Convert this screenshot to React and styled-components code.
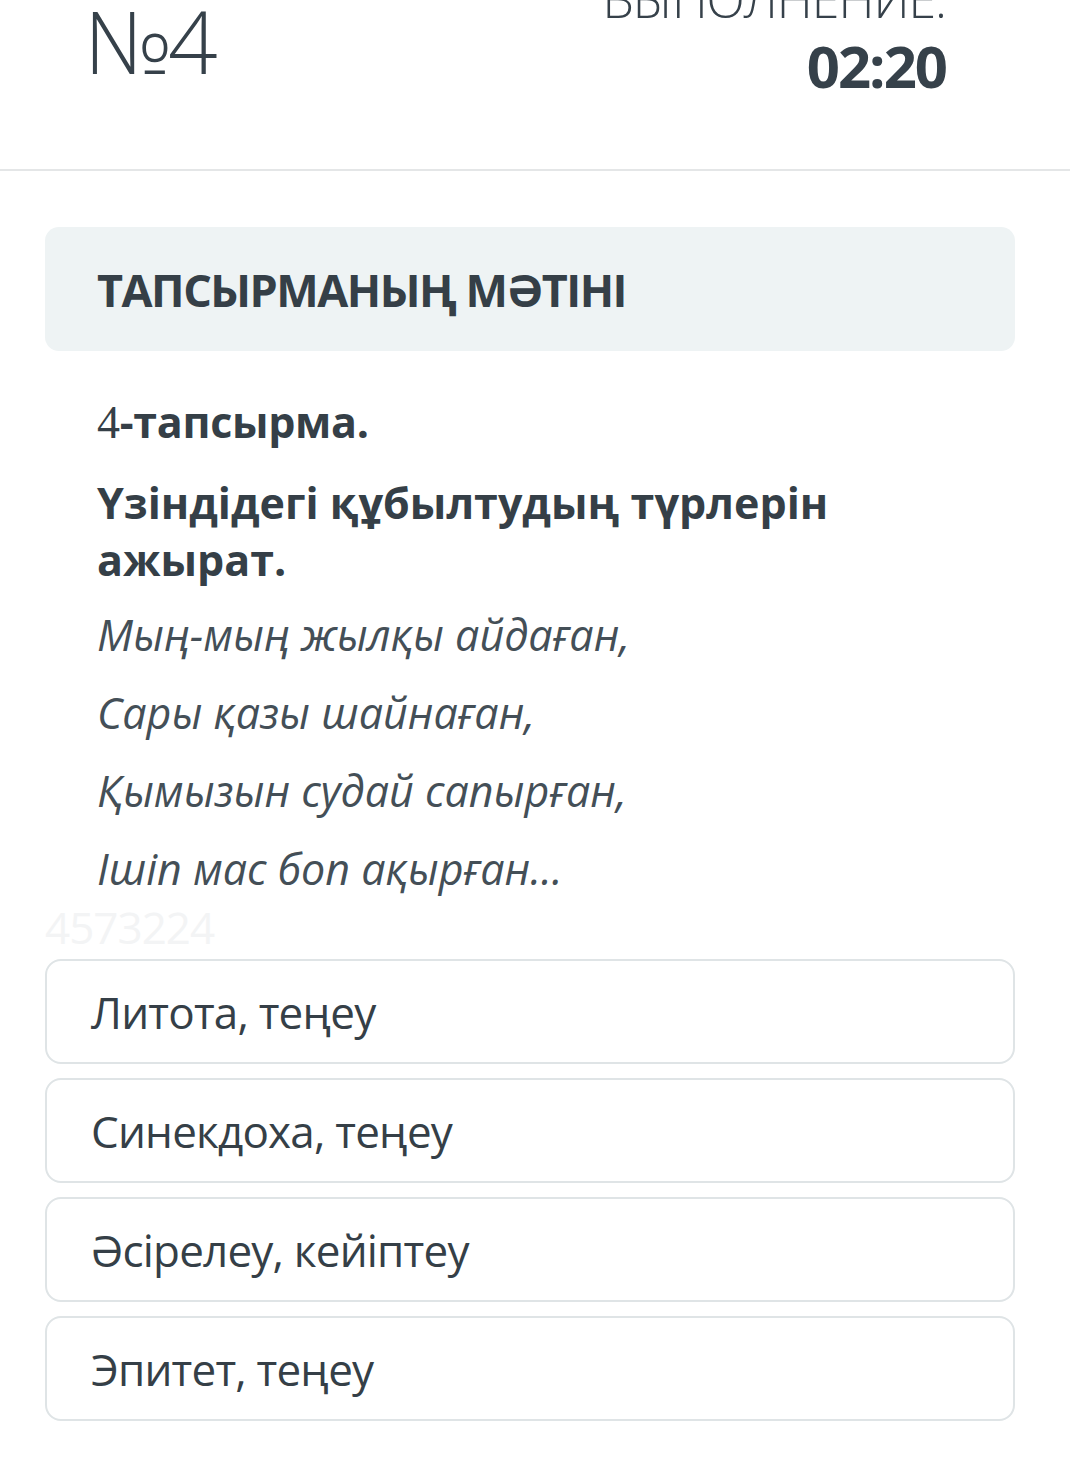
import React from "react";
import styled, { createGlobalStyle } from "styled-components";

const Global = createGlobalStyle`
  html, body { margin: 0; padding: 0; background: #ffffff; }
  body { font-family: "Open Sans", "Noto Sans", sans-serif; color: #353f47; }
`;

const Page = styled.div`
  width: 1070px;
  min-height: 1472px;
  background: #ffffff;
  overflow: hidden;
`;

const TopBar = styled.header`
  display: flex;
  justify-content: space-between;
  align-items: flex-start;
  padding: 0 124px 0 84px;
  border-bottom: 2px solid #e4e6e7;
  box-sizing: border-box;
  height: 171px;
`;

const Number = styled.div`
  font-size: 87px;
  font-weight: 300;
  line-height: 1.1;
  margin-top: -7px;
  letter-spacing: -4px;
  color: #36414a;
`;

const Timer = styled.div`
  display: flex;
  flex-direction: column;
  align-items: flex-end;
  margin-top: -35px;
`;

const TimerLabel = styled.div`
  font-size: 50px;
  font-weight: 300;
  line-height: 68px;
  letter-spacing: -1px;
  color: #36414a;
`;

const TimerValue = styled.div`
  font-size: 58px;
  font-weight: 700;
  line-height: 66px;
  letter-spacing: -2px;
  color: #36414a;
`;

const Content = styled.main`
  padding: 56px 55px 0 45px;
  display: flex;
  flex-direction: column;
`;

const TitleBox = styled.div`
  background: #eef3f4;
  border-radius: 14px;
  height: 124px;
  display: flex;
  align-items: center;
  padding-left: 52px;
`;

const Title = styled.h2`
  margin: 0;
  font-size: 45px;
  font-weight: 700;
  letter-spacing: -1.5px;
  color: #353f47;
`;

const Body = styled.section`
  padding: 42px 52px 0 52px;
  display: flex;
  flex-direction: column;
`;

const TaskNo = styled.p`
  margin: 0;
  font-size: 43px;
  font-weight: 700;
  line-height: 58px;
  letter-spacing: -0.3px;
  color: #353f47;
  & span {
    font-family: "Liberation Serif", "DejaVu Serif", serif;
    font-weight: 400;
    font-size: 46px;
  }
`;

const Question = styled.p`
  margin: 22px 0 0;
  font-size: 43px;
  font-weight: 700;
  line-height: 57px;
  letter-spacing: 0px;
  color: #353f47;
`;

const Verse = styled.p`
  margin: ${(p) => (p.$first ? "18px" : "20px")} 0 0;
  font-size: 43px;
  font-style: italic;
  font-weight: 400;
  line-height: 58px;
  letter-spacing: 0px;
  color: #444f57;
`;

const Watermark = styled.div`
  margin: 4px 0 7px -52px;
  height: 50px;
  font-size: 44px;
  line-height: 50px;
  color: #f3f4f5;
  letter-spacing: -1px;
`;

const Options = styled.ul`
  list-style: none;
  margin: 0;
  padding: 0;
  display: flex;
  flex-direction: column;
  gap: 14px;
`;

const Option = styled.li`
  height: 105px;
  box-sizing: border-box;
  border: 2px solid #dfe4e6;
  border-radius: 16px;
  display: flex;
  align-items: center;
  padding-left: 44px;
  font-size: 44px;
  font-weight: 400;
  letter-spacing: -0.8px;
  color: #353f47;
`;

const verses = [
  "Мың-мың жылқы айдаған,",
  "Сары қазы шайнаған,",
  "Қымызын судай сапырған,",
  "Ішіп мас боп ақырған...",
];

const options = [
  "Литота, теңеу",
  "Синекдоха, теңеу",
  "Әсірелеу, кейіптеу",
  "Эпитет, теңеу",
];

export default function App() {
  return (
    <Page>
      <Global />
      <TopBar>
        <Number>№4</Number>
        <Timer>
          <TimerLabel>ВЫПОЛНЕНИЕ:</TimerLabel>
          <TimerValue>02:20</TimerValue>
        </Timer>
      </TopBar>
      <Content>
        <TitleBox>
          <Title>ТАПСЫРМАНЫҢ МӘТІНІ</Title>
        </TitleBox>
        <Body>
          <TaskNo>
            <span>4</span>-тапсырма.
          </TaskNo>
          <Question>Үзіндідегі құбылтудың түрлерін ажырат.</Question>
          {verses.map((v, i) => (
            <Verse key={v} $first={i === 0}>
              {v}
            </Verse>
          ))}
          <Watermark>4573224</Watermark>
        </Body>
        <Options>
          {options.map((o) => (
            <Option key={o}>{o}</Option>
          ))}
        </Options>
      </Content>
    </Page>
  );
}
